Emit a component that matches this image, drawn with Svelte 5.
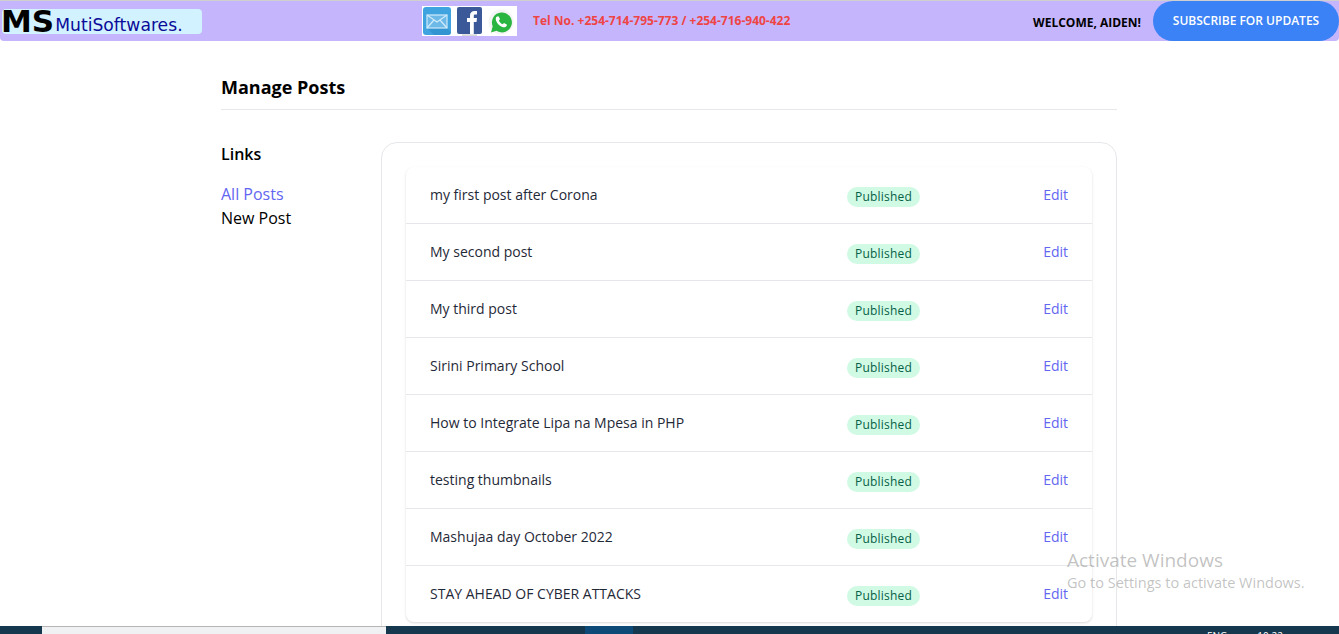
<script>
  const posts = [
    'my first post after Corona',
    'My second post',
    'My third post',
    'Sirini Primary School',
    'How to Integrate Lipa na Mpesa in PHP',
    'testing thumbnails',
    'Mashujaa day October 2022',
    'STAY AHEAD OF CYBER ATTACKS'
  ];
</script>

<div class="page">
  <header class="topbar">
    <div class="logo"><span class="ms">MS</span><span class="name">MutiSoftwares.</span></div>
    <div class="contact">
      <div class="icons">
        <svg class="ic" width="28" height="29" viewBox="0 0 28 29">
          <rect width="28" height="28" rx="3" fill="#3fa3e0"/>
          <path d="M4 21 L11 28 L25 28 Q28 28 28 25 L24 21Z" fill="#2f8dcc" opacity=".7"/>
          <rect x="4" y="8" width="20" height="13" fill="#bfe3f7" fill-opacity=".35" stroke="#cfeafa" stroke-width="1.2"/>
          <path d="M4 8 L14 15 L24 8 M4 21 L11 13 M24 21 L17 13" fill="none" stroke="#cfeafa" stroke-width="1.2"/>
        </svg>
        <svg class="ic" width="26" height="29" viewBox="0 0 26 29">
          <rect width="25" height="27" rx="2" fill="#3b5998"/>
          <path d="M13 27 V15 H10 V11 H13 V8.500 C13 5.500 15 4 17.500 4 H20 V7.500 H18 C17 7.500 16.800 8 16.800 9 V11 H20 L19.500 15 H16.800 V27Z" fill="#fff"/>
          <rect x="5" y="27.500" width="15" height="1.200" fill="#c9c9c9"/>
        </svg>
        <svg class="ic wa" width="26" height="26" viewBox="0 0 26 26">
          <circle cx="13" cy="13" r="12.500" fill="#f4f4f4"/>
          <path d="M3 23.500 L4.700 17.300 A10 10 0 1 1 8.500 21.800Z" fill="#2ab540"/>
          <path d="M9 7.500 C8 8 7.400 9.500 8 11.500 C9 14.500 12 17.500 15 18.200 C17 18.600 18.500 17.800 18.800 16.500 L18.800 15.500 L16 14 L14.700 15.300 C13 14.600 11.600 13.200 10.900 11.500 L12 10.200 L10.800 7.500Z" fill="#fff"/>
        </svg>
      </div>
      <span class="tel">Tel No. +254-714-795-773 / +254-716-940-422</span>
    </div>
    <div class="right">
      <span class="welcome">WELCOME, AIDEN!</span>
      <a class="subscribe" href="#top">SUBSCRIBE FOR UPDATES</a>
    </div>
  </header>

  <main class="wrap">
    <h1>Manage Posts</h1>
    <div class="cols">
      <aside>
        <h2>Links</h2>
        <a class="active" href="#top">All Posts</a>
        <a href="#top">New Post</a>
      </aside>
      <section class="panel">
        <ul class="list">
          {#each posts as post}
            <li>
              <span class="title">{post}</span>
              <span class="badge">Published</span>
              <a class="edit" href="#top">Edit</a>
            </li>
          {/each}
        </ul>
      </section>
    </div>
  </main>

  <div class="activate">
    <div class="a1">Activate Windows</div>
    <div class="a2">Go to Settings to activate Windows.</div>
  </div>

  <footer class="taskbar">
    <div class="search"></div>
    <div class="task"></div>
    <div class="tray"><span>ENG</span><span>10:22</span></div>
  </footer>
</div>

<style>
  :global(body) { margin: 0; background: #fff; font-family: "Open Sans", sans-serif; overflow: hidden; }
  .page { position: relative; height: 634px; overflow: hidden; }
  a { text-decoration: none; }

  .topbar {
    display: flex; align-items: center; height: 40px; box-sizing: content-box;
    background: #c4b5fd; border-top: 1px solid #cfcfcf; position: relative;
    border-radius: 0 0 4px 4px;
  }
  .logo {
    margin-left: 2px; margin-top: 1px; width: 200px; height: 25px; background: #d2f2ff; border-radius: 4px;
    display: flex; align-items: flex-end;
    font-family: "DejaVu Sans", Verdana, sans-serif;
  }
  .ms { font-weight: 700; font-size: 31px; line-height: 25px; color: #000; margin-left: -1px; }
  .name { color: #0b0b99; font-size: 17.200px; line-height: 20px; margin: 0 0 -1px 1px; }

  .contact { position: absolute; left: 422px; top: 5px; display: flex; align-items: center; }
  .icons { width: 95px; height: 30px; background: #fff; display: flex; gap: 6px; align-items: flex-start; padding: 1px 0 0 1px; box-sizing: border-box; }
  .ic { display: block; flex: none; }
  .wa { margin: 2px 0 0 -1px; }
  .tel { margin-left: 16px; font-size: 12px; font-weight: 700; color: #ef4444; line-height: 30px; }

  .right { margin-left: auto; display: flex; align-items: center; }
  .welcome { font-size: 12px; font-weight: 700; color: #000; margin-right: 12px; margin-top: 3px; }
  .subscribe {
    display: flex; align-items: center; justify-content: center; width: 186px; height: 40px;
    box-sizing: border-box; padding-bottom: 2px;
    background: #3b82f6; color: #fff; border-radius: 20px; font-size: 12px; font-weight: 600;
  }

  .wrap { width: 896px; margin: 0 0 0 221px; box-sizing: border-box; }
  h1 { margin: 0; padding: 32px 0 8px; font-size: 18px; line-height: 28px; font-weight: 700; color: #000; border-bottom: 1px solid #e5e7eb; }
  .cols { display: flex; margin-top: 32px; }
  aside { width: 160px; flex: none; display: flex; flex-direction: column; align-items: flex-start; }
  h2 { margin: 0 0 16px; font-size: 16px; line-height: 24px; font-weight: 600; color: #000; }
  aside a { font-size: 16px; line-height: 24px; color: #000; }
  aside a.active { color: #6366f1; }
  .panel { flex: 1; height: 560px; box-sizing: border-box; border: 1px solid #e5e7eb; border-radius: 16px; padding: 24px; }
  .list {
    list-style: none; margin: 0; padding: 0; border-radius: 8px; background: #fff;
    box-shadow: 0 1px 3px rgba(0,0,0,.1), 0 1px 2px rgba(0,0,0,.06);
  }
  li { display: flex; align-items: center; height: 56px; padding: 0 24px; border-top: 1px solid #e5e7eb; font-size: 14px; color: #1f2937; }
  li:first-child { border-top: 0; }
  .title { width: 417px; flex: none; margin-bottom: 2px; }
  .badge {
    background: #d1fae5; color: #065f46; font-size: 12px; font-weight: 500; line-height: 20px; letter-spacing: .2px;
    padding: 0 8px; border-radius: 10px; margin-top: 4px;
  }
  .edit { margin-left: auto; color: #6366f1; margin-bottom: 2px; }

  .activate { position: absolute; left: 1067px; top: 548px; color: rgba(120,120,120,.45); pointer-events: none; font-family: "Open Sans", sans-serif; }
  .a1 { font-size: 19px; line-height: 24px; }
  .a2 { font-size: 14.500px; line-height: 22px; }

  .taskbar { position: absolute; left: 0; right: 0; bottom: 0; height: 8px; background: #16384f; display: flex; overflow: hidden; }
  .search { position: absolute; left: 42px; top: 0; width: 344px; height: 8px; background: #f0f1f3; border-top: 1px solid #b5b5b5; box-sizing: border-box; }
  .task { position: absolute; left: 585px; top: 0; width: 48px; height: 8px; background: #0d4a78; }
  .tray { position: absolute; left: 1207px; top: 3px; color: #fff; font-size: 10px; line-height: 14px; display: flex; gap: 30px; }
</style>
